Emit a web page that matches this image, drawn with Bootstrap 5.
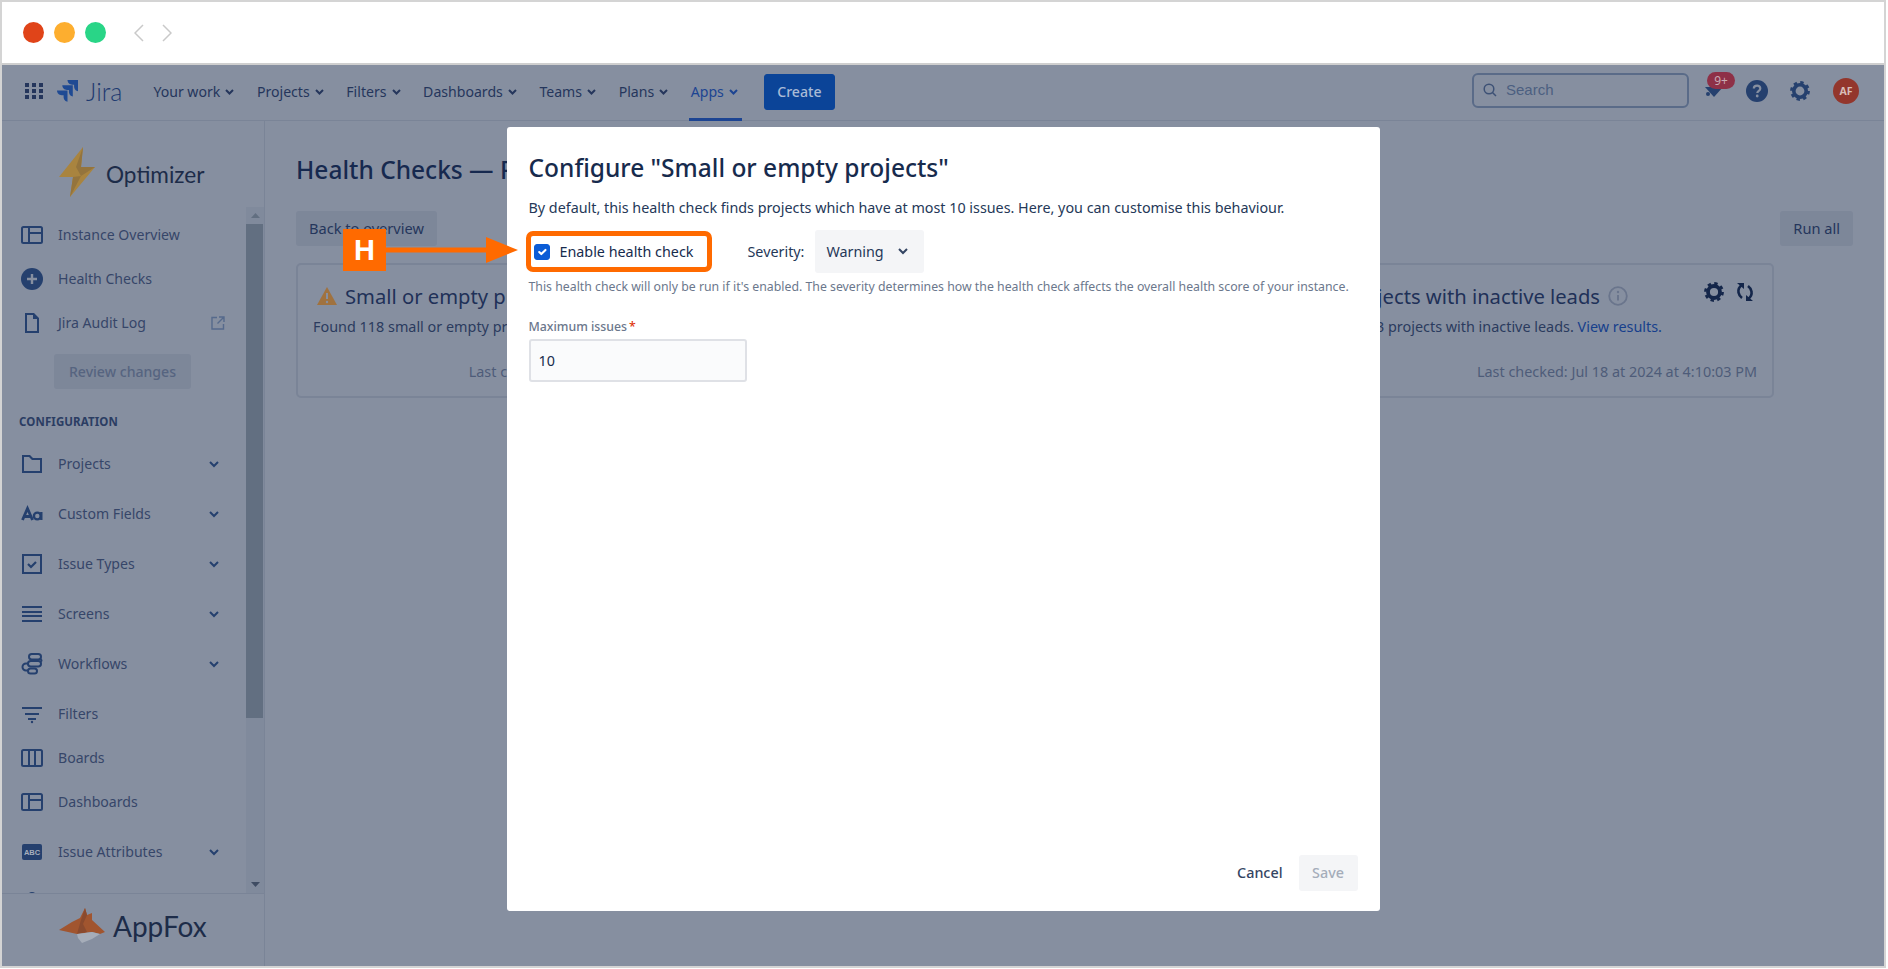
<!DOCTYPE html>
<html lang="en">
  <head>
    <meta charset="UTF-8" />
    <title>Configure health check</title>
    <link href="https://cdn.jsdelivr.net/npm/bootstrap@5.3.0/dist/css/bootstrap.min.css" rel="stylesheet" />
    <style>
      body { margin: 0; background: #fff; font-family: "Noto Sans", "Liberation Sans", sans-serif; font-size: 14px; color: #16294f; overflow: hidden; }
      .frame { position: relative; width: 1886px; height: 968px; border: 2px solid #d4d4d4; background: #868fa0; }

      /* browser chrome */
      .chrome-bar { height: 63px; background: #fff; border-bottom: 2px solid #cfcfcf; padding-left: 21px; gap: 10px; }
      .dot { width: 21px; height: 21px; border-radius: 50%; }
      .dot-red { background: #e04419; }
      .dot-amber { background: #fdae2f; }
      .dot-green { background: #29d587; }
      .chrome-arrows { margin-left: 18px; gap: 18px; }

      /* jira top bar */
      .jira-bar { height: 56px; padding: 0 25px 3px 23px; border-bottom: 1px solid #7a8497; flex-wrap: nowrap; }
      .jira-logo { margin-left: 14px; }
      .jira-word { font-family: "Lato", sans-serif; font-size: 25px; font-weight: 300; color: #1e3a70; margin-left: 7px; line-height: 1; }
      .top-links { gap: 22.6px; margin-left: 31px; margin-top: 2px; }
      .top-link { position: relative; height: 52px; color: #25365c; font-size: 14.1px; gap: 5px; text-decoration: none; }
      .top-link.is-active { color: #1c4492; }
      .top-link.is-active::after { content: ""; position: absolute; left: -2px; right: -4px; bottom: -3px; height: 3px; background: #1c4492; }
      .btn-create { width: 71px; height: 36px; margin-left: 26px; margin-top: 2px; padding: 0; background: #0b4498; border-color: #0b4498; color: #a9bbd6; font-size: 14.1px; font-weight: 500; border-radius: 3px; }
      .search-box { width: 217px; height: 35px; margin-bottom: 2px; border: 2px solid #5a6b88; border-radius: 6px; padding-left: 9px; gap: 9px; color: #4c5f80; font-family: "Liberation Sans", sans-serif; font-size: 15px; }
      .bell-wrap { position: relative; width: 24px; height: 24px; margin-left: 12px; }
      .bell-count { position: absolute; left: 6px; top: -7px; width: 28px; height: 17px; background: #8e3047; color: #c9a9b3; border-radius: 9px; font-size: 12px; line-height: 17px; text-align: center; }
      .help-icon { margin-left: 21px; }
      .gear-icon { margin-left: 22px; }
      .avatar-round { width: 26px; height: 26px; margin-left: 23px; border-radius: 50%; background: #93362c; color: #d8bdb8; font-size: 10.5px; font-weight: 700; line-height: 26px; text-align: center; }

      /* sidebar */
      .app-row { height: 845px; }
      .side-col { width: 263px; flex: none; border-right: 1px solid #7a8497; }
      .side-logo { height: 86px; padding-left: 57px; padding-top: 16px; gap: 10px; }
      .side-logo-word { font-family: "Lato", sans-serif; font-size: 22.6px; color: #1d2c49; margin-top: 5px; }
      .side-scroll { height: 687px; border-bottom: 1px solid #7a8497; }
      .side-list { flex: 1; overflow: hidden; padding-top: 6px; }
      .side-row { height: 44px; padding-left: 18px; padding-right: 27px; gap: 14px; color: #364669; font-size: 14.1px; }
      .side-row.is-tall { height: 50px; }
      .side-row.has-gap { margin-top: 3px; }
      .side-row > span { flex: 1; white-space: nowrap; }
      .side-row > svg { flex: none; }
      .side-row > svg.side-ext { margin-right: -6px; }
      .btn-review { display: block; width: 137px; height: 35px; margin: 9px 0 0 52px; padding: 0; background: #7d8799; border: 0; color: #566480; font-size: 14.1px; font-weight: 500; border-radius: 3px; }
      .side-heading { margin: 15px 0 0 17px; height: 35px; font-size: 11.5px; font-weight: 700; color: #2b3d63; letter-spacing: .1px; }
      .scroll-track { width: 18px; flex: none; background: #808a9c; }
      .scroll-arrow { height: 17px; }
      .scroll-thumb { width: 17px; height: 494px; background: #626f81; }
      .scroll-fill { flex: 1; }
      .side-foot { padding: 14px 0 0 57px; gap: 7px; }
      .side-foot-word { font-family: "Lato", sans-serif; font-size: 28px; color: #1d2c49; line-height: 1; }

      /* page under the dialog */
      .main-col { flex: 1; padding: 33px 31px 0 31px; }
      .page-title { font-size: 24.5px; font-weight: 500; line-height: 32px; color: #16294f; margin: 0 0 25px; white-space: nowrap; }
      .btn-dim { height: 35px; padding: 0 13px; background: #7d8799; border: 0; color: #25365c; font-size: 14.6px; border-radius: 3px; }
      .card-rows { width: 1478px; margin-top: 17px; }
      .check-card { width: 478px; height: 135px; background: transparent; border: 2px solid #7a8497; border-radius: 5px; padding: 17px 15px 0 15px; }
      .check-title { font-size: 20.2px; color: #1f3158; line-height: 28px; gap: 8px; padding-left: 4px; white-space: nowrap; }
      .check-text { color: #2b3b5e; font-size: 14.4px; margin-top: 6px; white-space: nowrap; }
      .check-text a { color: #173f8c; text-decoration: none; }
      .check-date { color: #4e5c79; font-size: 14.4px; text-align: right; margin-top: 23px; white-space: nowrap; }
      .card-tools { position: absolute; right: 18px; top: 17px; gap: 12px; }

      /* dialog */
      .dialog-layer { position: absolute; left: 0; right: 0; top: 125px; }
      .dialog-box { width: 873px; height: 784px; margin: 0 auto; background: #fff; border: 0; border-radius: 3px; padding: 25px 22px 20px; }
      .dialog-title { font-size: 24.5px; font-weight: 500; line-height: 32px; color: #172b4d; margin: 0 0 12px; }
      .dialog-lead { font-size: 14.33px; line-height: 24px; color: #253858; margin: 0; white-space: nowrap; }
      .opt-row { margin-top: 10px; height: 43px; }
      .opt-mark { width: 186px; height: 41px; margin-left: -3px; border: 5px solid #ff6a00; border-radius: 7px; padding-left: 3px; gap: 10px; }
      .opt-mark .form-check-input { width: 16px; height: 16px; margin: 0; float: none; background-color: #0b5cd6; border-color: #0b5cd6; border-radius: 3px; }
      .opt-mark label { font-size: 14.33px; color: #172b4d; white-space: nowrap; }
      .opt-sev { margin-left: 36px; margin-right: 11px; font-size: 14.33px; color: #253858; }
      .btn-sev { width: 109px; height: 43px; padding: 0 0 0 11px; gap: 14px; background: #f4f5f7; border: 0; color: #253858; font-size: 14.33px; border-radius: 3px; }
      .dialog-help { font-size: 12.3px; line-height: 16px; color: #6b778c; margin: 6px 0 0; white-space: nowrap; }
      .dialog-label { font-size: 12.3px; font-weight: 500; line-height: 16px; color: #6b778c; margin: 24px 0 4px; display: block; }
      .dialog-label i { color: #de350b; font-style: normal; margin-left: 2px; }
      .dialog-input { width: 218px; height: 43px; padding: 0 8px; background: #fafbfc; border: 2px solid #dfe1e6; border-radius: 3px; color: #172b4d; font-size: 14.33px; }
      .dialog-foot { margin-top: auto; gap: 16px; }
      .btn-cancel { padding: 0; border: 0; color: #344563; font-size: 14.33px; font-weight: 500; }
      .btn.btn-save:disabled { width: 59px; height: 36px; padding: 0; border: 0; background: #f4f5f7; color: #a5adba; font-size: 14.33px; font-weight: 500; border-radius: 3px; opacity: 1; }

      /* annotation laid over the dialog */
      .note-h { position: absolute; left: 341px; top: 227px; width: 43px; height: 42px; background: #ff6a00; color: #fff; font-size: 29px; font-weight: 700; line-height: 42px; text-align: center; font-family: "Liberation Sans", sans-serif; }
      .note-arrow { position: absolute; left: 384px; top: 235px; }
    </style>
  </head>
  <body>
    <div class="frame">
      <div class="chrome-bar d-flex align-items-center">
        <div class="dot dot-red"></div>
        <div class="dot dot-amber"></div>
        <div class="dot dot-green"></div>
        <div class="chrome-arrows d-flex">
          <svg width="10" height="18" viewBox="0 0 10 18"><path d="M9 1 1 9l8 8" fill="none" stroke="#c9c9c9" stroke-width="1.5"/></svg>
          <svg width="10" height="18" viewBox="0 0 10 18"><path d="m1 1 8 8-8 8" fill="none" stroke="#c9c9c9" stroke-width="1.5"/></svg>
        </div>
      </div>

      <nav class="navbar jira-bar d-flex align-items-center">
        <svg width="18" height="16" viewBox="0 0 18 16" fill="#25365c"><rect x="0" y="0" width="4" height="4"/><rect x="7" y="0" width="4" height="4"/><rect x="14" y="0" width="4" height="4"/><rect x="0" y="6" width="4" height="4"/><rect x="7" y="6" width="4" height="4"/><rect x="14" y="6" width="4" height="4"/><rect x="0" y="12" width="4" height="4"/><rect x="7" y="12" width="4" height="4"/><rect x="14" y="12" width="4" height="4"/></svg>
        <svg class="jira-logo" width="22" height="22" viewBox="0 0 22 22" fill="#1f4a93"><path d="M21 0H10.5c0 2.6 2.1 4.7 4.7 4.7h1.9v1.9c0 2.6 2.1 4.7 3.9 4.7z"/><path d="M15.8 5.2H5.3c0 2.6 2.1 4.7 4.7 4.7h1.9v1.9c0 2.6 2.1 4.7 3.9 4.7z"/><path d="M10.500 10.500H0c0 2.600 2.100 4.700 4.700 4.700h1.900v1.900c0 2.600 2.100 4.700 3.900 4.700z"/></svg>
        <span class="jira-word">Jira</span>
        <div class="top-links d-flex">
          <a class="top-link d-flex align-items-center" href="#">Your work <svg width="9" height="6" viewBox="0 0 9 6"><path d="m1 1 3.5 3.5L8 1" fill="none" stroke="currentColor" stroke-width="2"/></svg></a>
          <a class="top-link d-flex align-items-center" href="#">Projects <svg width="9" height="6" viewBox="0 0 9 6"><path d="m1 1 3.5 3.5L8 1" fill="none" stroke="currentColor" stroke-width="2"/></svg></a>
          <a class="top-link d-flex align-items-center" href="#">Filters <svg width="9" height="6" viewBox="0 0 9 6"><path d="m1 1 3.5 3.5L8 1" fill="none" stroke="currentColor" stroke-width="2"/></svg></a>
          <a class="top-link d-flex align-items-center" href="#">Dashboards <svg width="9" height="6" viewBox="0 0 9 6"><path d="m1 1 3.5 3.5L8 1" fill="none" stroke="currentColor" stroke-width="2"/></svg></a>
          <a class="top-link d-flex align-items-center" href="#">Teams <svg width="9" height="6" viewBox="0 0 9 6"><path d="m1 1 3.5 3.5L8 1" fill="none" stroke="currentColor" stroke-width="2"/></svg></a>
          <a class="top-link d-flex align-items-center" href="#">Plans <svg width="9" height="6" viewBox="0 0 9 6"><path d="m1 1 3.5 3.5L8 1" fill="none" stroke="currentColor" stroke-width="2"/></svg></a>
          <a class="top-link is-active d-flex align-items-center" href="#">Apps <svg width="9" height="6" viewBox="0 0 9 6"><path d="m1 1 3.5 3.5L8 1" fill="none" stroke="currentColor" stroke-width="2"/></svg></a>
        </div>
        <button class="btn btn-create" type="button">Create</button>
        <div class="ms-auto d-flex align-items-center">
          <div class="search-box d-flex align-items-center">
            <svg width="14" height="14" viewBox="0 0 14 14"><circle cx="6" cy="6" r="4.8" fill="none" stroke="#3d5175" stroke-width="1.5"/><path d="m9.5 9.5 3.5 3.5" stroke="#3d5175" stroke-width="1.5"/></svg>
            <span>Search</span>
          </div>
          <div class="bell-wrap">
            <svg width="24" height="24" viewBox="0 0 24 24" fill="#25406e"><path d="M4 8h18l-9 10z"/><circle cx="7" cy="15" r="2"/></svg>
            <span class="bell-count">9+</span>
          </div>
          <svg class="help-icon" width="22" height="22" viewBox="0 0 22 22"><circle cx="11" cy="11" r="11" fill="#25406e"/><path d="M7.8 8.6c0-1.8 1.4-3 3.3-3s3.2 1.1 3.2 2.8c0 2.4-3 2.4-3 4.6" fill="none" stroke="#868fa0" stroke-width="2.2"/><circle cx="11.2" cy="16" r="1.4" fill="#868fa0"/></svg>
          <svg class="gear-icon" width="20" height="20" viewBox="0 0 20 20"><circle cx="10" cy="10" r="6.2" fill="none" stroke="#25406e" stroke-width="3.6"/><circle cx="10" cy="10" r="8.6" fill="none" stroke="#25406e" stroke-width="2.6" stroke-dasharray="3.4 3.35"/></svg>
          <div class="avatar-round">AF</div>
        </div>
      </nav>

      <div class="app-row d-flex">
        <aside class="side-col">
          <div class="side-logo d-flex align-items-center">
            <svg width="37" height="50" viewBox="0 0 37 50"><polygon points="24,0 0,30 14,30 11,50 36,20 22,20" fill="#a9843f"/><polygon points="24,0 17,20 22,29 14,30 11,50 22,29 36,20 22,20" fill="#94743d"/></svg>
            <span class="side-logo-word">Optimizer</span>
          </div>
          <div class="side-scroll d-flex">
            <div class="side-list">
              <div class="side-row d-flex align-items-center">
                <svg width="24" height="24" viewBox="0 0 24 24" fill="none" stroke="#25406e" stroke-width="2"><rect x="2" y="4" width="20" height="16" rx="1.5"/><path d="M9 4v16M9 10h13"/></svg><span>Instance Overview</span>
              </div>
              <div class="side-row d-flex align-items-center">
                <svg width="24" height="24" viewBox="0 0 24 24"><circle cx="12" cy="12" r="11" fill="#25406e"/><path d="M12 7v10M7 12h10" stroke="#868fa0" stroke-width="2.4"/></svg><span>Health Checks</span>
              </div>
              <div class="side-row d-flex align-items-center">
                <svg width="24" height="24" viewBox="0 0 24 24"><path d="M5 2h9l5 5v15H5zM7 4v16h10V8h-4V4z" fill="#25406e" fill-rule="evenodd"/></svg><span>Jira Audit Log</span>
                <svg class="side-ext" width="14" height="14" viewBox="0 0 14 14" fill="none" stroke="#566a8c" stroke-width="1.4"><path d="M6 1.500H1v11.500h11.500V8M8 1h5v5M13 1 6.500 7.500"/></svg>
              </div>
              <button class="btn btn-review" type="button">Review changes</button>
              <div class="side-heading d-flex align-items-center">CONFIGURATION</div>
              <div class="side-row is-tall d-flex align-items-center">
                <svg width="24" height="24" viewBox="0 0 24 24"><path d="M2 3h8l3 3h9v15H2zM4 5v14h16V8h-8l-3-3z" fill="#25406e" fill-rule="evenodd"/></svg><span>Projects</span>
                <svg width="10" height="7" viewBox="0 0 10 7"><path d="m1 1 4 4 4-4" fill="none" stroke="#25406e" stroke-width="2"/></svg>
              </div>
              <div class="side-row is-tall d-flex align-items-center">
                <svg width="24" height="24" viewBox="0 0 24 24" fill="none" stroke="#25406e" stroke-width="2.8"><path d="M2.500 18 7.500 6.500 12.500 18M4.500 14.500h6"/><circle cx="17.300" cy="14" r="3.400" stroke-width="2.400"/><path d="M21.300 10v8" stroke-width="2.400"/></svg><span>Custom Fields</span>
                <svg width="10" height="7" viewBox="0 0 10 7"><path d="m1 1 4 4 4-4" fill="none" stroke="#25406e" stroke-width="2"/></svg>
              </div>
              <div class="side-row is-tall d-flex align-items-center">
                <svg width="24" height="24" viewBox="0 0 24 24" fill="none" stroke="#25406e" stroke-width="2"><rect x="3" y="3" width="18" height="18"/><path d="m8 12 3 3 5-5" stroke-width="2.2"/></svg><span>Issue Types</span>
                <svg width="10" height="7" viewBox="0 0 10 7"><path d="m1 1 4 4 4-4" fill="none" stroke="#25406e" stroke-width="2"/></svg>
              </div>
              <div class="side-row is-tall d-flex align-items-center">
                <svg width="24" height="24" viewBox="0 0 24 24" fill="#25406e"><rect x="2" y="4" width="20" height="2"/><rect x="2" y="9" width="20" height="2"/><rect x="2" y="13" width="20" height="2"/><rect x="2" y="18" width="20" height="2"/></svg><span>Screens</span>
                <svg width="10" height="7" viewBox="0 0 10 7"><path d="m1 1 4 4 4-4" fill="none" stroke="#25406e" stroke-width="2"/></svg>
              </div>
              <div class="side-row is-tall d-flex align-items-center">
                <svg width="24" height="24" viewBox="0 0 24 24" fill="none" stroke="#25406e" stroke-width="2"><rect x="9" y="2" width="12" height="5.500" rx="2.750"/><rect x="8" y="9" width="13" height="5.500" rx="2.750"/><rect x="8" y="16.500" width="9" height="5" rx="2.500"/><path d="M9 11.500H6a3.500 3.500 0 0 0 0 7h2M20 7c1.500.5 2 1.500 1 2.500"/></svg><span>Workflows</span>
                <svg width="10" height="7" viewBox="0 0 10 7"><path d="m1 1 4 4 4-4" fill="none" stroke="#25406e" stroke-width="2"/></svg>
              </div>
              <div class="side-row has-gap d-flex align-items-center">
                <svg width="24" height="24" viewBox="0 0 24 24" fill="#25406e"><rect x="2" y="5" width="20" height="2"/><rect x="5" y="11" width="14" height="2"/><rect x="8" y="16" width="8" height="2"/><circle cx="12" cy="20" r="1.200"/></svg><span>Filters</span>
              </div>
              <div class="side-row d-flex align-items-center">
                <svg width="24" height="24" viewBox="0 0 24 24" fill="none" stroke="#25406e" stroke-width="2"><rect x="2" y="4" width="20" height="16" rx="1.500"/><path d="M9 4v16M15 4v16"/></svg><span>Boards</span>
              </div>
              <div class="side-row d-flex align-items-center">
                <svg width="24" height="24" viewBox="0 0 24 24" fill="none" stroke="#25406e" stroke-width="2"><rect x="2" y="4" width="20" height="16" rx="1.500"/><path d="M9 4v16M9 10h13"/></svg><span>Dashboards</span>
              </div>
              <div class="side-row is-tall has-gap d-flex align-items-center">
                <svg width="24" height="18" viewBox="0 0 24 18"><rect x="2" y="1" width="20" height="16" rx="2" fill="#25406e"/><text x="12" y="12" text-anchor="middle" font-family="Liberation Sans, sans-serif" font-size="7.500" font-weight="700" fill="#a7afbd">ABC</text></svg><span>Issue Attributes</span>
                <svg width="10" height="7" viewBox="0 0 10 7"><path d="m1 1 4 4 4-4" fill="none" stroke="#25406e" stroke-width="2"/></svg>
              </div>
              <div class="side-row is-tall d-flex align-items-center">
                <svg width="24" height="24" viewBox="0 0 24 24"><circle cx="12" cy="7" r="5" fill="#25406e"/></svg>
              </div>
            </div>
            <div class="scroll-track d-flex flex-column">
              <div class="scroll-arrow d-flex align-items-center justify-content-center">
                <svg width="9" height="5" viewBox="0 0 9 5"><path d="M0 5 4.500 0 9 5z" fill="#626f81"/></svg>
              </div>
              <div class="scroll-thumb"></div>
              <div class="scroll-fill"></div>
              <div class="scroll-arrow d-flex align-items-center justify-content-center">
                <svg width="9" height="5" viewBox="0 0 9 5"><path d="M0 0h9L4.500 5z" fill="#3f4c63"/></svg>
              </div>
            </div>
          </div>
          <div class="side-foot d-flex align-items-center">
            <svg width="47" height="36" viewBox="0 0 47 36"><polygon points="0,22 13,14 21,10 26,0 28,7 33,5 33,12 46,24 41,26 33,24 18,26" fill="#a1552f"/><polygon points="18,26 22,12 26,0 28,7 24,16 28,24" fill="#8a4a2e"/><polygon points="18,26 33,24 41,26 33,31 23,35 19,30" fill="#a6adb9"/></svg>
            <span class="side-foot-word">AppFox</span>
          </div>
        </aside>

        <main class="main-col">
          <h1 class="page-title">Health Checks — Projects</h1>
          <div class="d-flex justify-content-between">
            <button class="btn btn-dim" type="button">Back to overview</button>
            <button class="btn btn-dim" type="button">Run all</button>
          </div>
          <div class="card-rows d-flex justify-content-between">
            <div class="card check-card">
              <div class="check-title d-flex align-items-center">
                <svg width="20" height="18" viewBox="0 0 20 18"><path d="M10 0 20 18H0z" fill="#a0723f"/><path d="M10 6v6" stroke="#868fa0" stroke-width="2"/><circle cx="10" cy="15" r="1.200" fill="#868fa0"/></svg>
                Small or empty projects
              </div>
              <div class="check-text">Found 118 small or empty projects.</div>
              <div class="check-date">Last checked: Jul 18 at 2024 at 12:10:03 PM</div>
            </div>
            <div class="card check-card">
              <div class="check-title d-flex align-items-center">
                <svg width="20" height="18" viewBox="0 0 20 18"><path d="M10 0 20 18H0z" fill="#a0723f"/></svg>
                Projects with inactive leads
                <svg width="20" height="20" viewBox="0 0 20 20"><circle cx="10" cy="10" r="8.800" fill="none" stroke="#6a758c" stroke-width="1.800"/><path d="M10 9v5.500" stroke="#6a758c" stroke-width="2"/><circle cx="10" cy="6" r="1.200" fill="#6a758c"/></svg>
              </div>
              <div class="check-text">Found 143 projects with inactive leads. <a href="#">View results.</a></div>
              <div class="check-date">Last checked: Jul 18 at 2024 at 4:10:03 PM</div>
              <div class="card-tools d-flex">
                <svg width="20" height="20" viewBox="0 0 20 20"><circle cx="10" cy="10" r="6" fill="none" stroke="#14264a" stroke-width="3.800"/><circle cx="10" cy="10" r="8.600" fill="none" stroke="#14264a" stroke-width="2.600" stroke-dasharray="3.400 3.350"/></svg>
                <svg width="18" height="20" viewBox="0 0 18 20" fill="none" stroke="#14264a" stroke-width="2.600"><path d="M6 3C3 5 2 7.500 2.500 10.500c.4 2.200 1.500 4 3.500 5.500M12 17c3-2 4-4.500 3.500-7.500-.4-2.200-1.500-4-3.500-5.500"/><path d="M1 1h7v6zM17 19h-7v-6z" fill="#14264a" stroke="none"/></svg>
              </div>
            </div>
          </div>
        </main>
      </div>

      <div class="dialog-layer">
        <div class="modal-content dialog-box">
          <h2 class="dialog-title">Configure "Small or empty projects"</h2>
          <p class="dialog-lead">By default, this health check finds projects which have at most 10 issues. Here, you can customise this behaviour.</p>
          <div class="opt-row d-flex align-items-center">
            <div class="opt-mark d-flex align-items-center">
              <input class="form-check-input" type="checkbox" id="enableCheck" checked />
              <label for="enableCheck">Enable health check</label>
            </div>
            <span class="opt-sev">Severity:</span>
            <button class="btn btn-sev d-flex align-items-center" type="button">Warning
              <svg width="10" height="7" viewBox="0 0 10 7"><path d="m1 1 4 4 4-4" fill="none" stroke="#344563" stroke-width="2"/></svg>
            </button>
          </div>
          <p class="dialog-help">This health check will only be run if it's enabled. The severity determines how the health check affects the overall health score of your instance.</p>
          <label class="dialog-label" for="maxIssues">Maximum issues<i>*</i></label>
          <input class="form-control dialog-input" id="maxIssues" value="10" />
          <div class="dialog-foot d-flex justify-content-end align-items-center">
            <button class="btn btn-cancel" type="button">Cancel</button>
            <button class="btn btn-save" type="button" disabled>Save</button>
          </div>
        </div>
      </div>

      <div class="note-h">H</div>
      <svg class="note-arrow" width="132" height="26" viewBox="0 0 132 26"><path d="M0 10.500h100V0l32 13-32 13V15.500H0z" fill="#ff6a00"/></svg>
    </div>

    <script src="https://cdn.jsdelivr.net/npm/bootstrap@5.3.0/dist/js/bootstrap.bundle.min.js"></script>
  </body>
</html>
